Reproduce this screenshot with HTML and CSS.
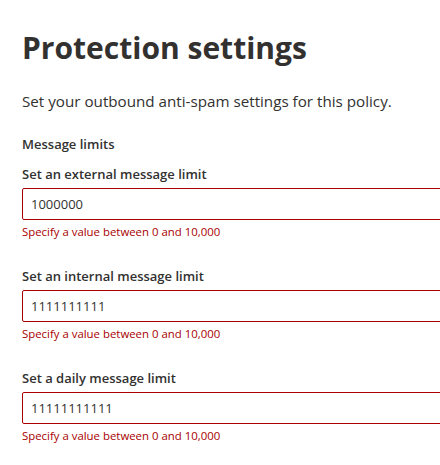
FILE: index.html
```html
<!DOCTYPE html>
<html lang="en">

<head>
  <meta charset="UTF-8">
  <meta name="viewport" content="width=device-width, initial-scale=1.0">
  <title>Protection settings</title>
  <link rel="stylesheet" href="styles.css">
</head>

<body>
  <div class="panel">
    <h1>Protection settings</h1>
    <p class="intro">Set your outbound anti-spam settings for this policy.</p>

    <h2>Message limits</h2>

    <div class="field">
      <label for="externalLimit">Set an external message limit</label>
      <input type="text" id="externalLimit" value="1000000">
      <div class="error">Specify a value between 0 and 10,000</div>
    </div>

    <div class="field">
      <label for="internalLimit">Set an internal message limit</label>
      <input type="text" id="internalLimit" value="1111111111">
      <div class="error">Specify a value between 0 and 10,000</div>
    </div>

    <div class="field">
      <label for="dailyLimit">Set a daily message limit</label>
      <input type="text" id="dailyLimit" value="11111111111">
      <div class="error">Specify a value between 0 and 10,000</div>
    </div>
  </div>
</body>

</html>
```

FILE: styles.css
```css
body {
  margin: 0;
  font-family: "Open Sans", "Noto Sans", sans-serif;
  color: #323130;
  background: #fff;
  overflow: hidden;
}

.panel {
  padding: 24px 0 0 22px;
  width: 480px;
}

h1 {
  margin: 0;
  font-size: 30px;
  font-weight: 700;
  line-height: 48px;
}

.intro {
  margin: 19px 0 0;
  font-size: 15.2px;
  line-height: 20px;
}

h2 {
  margin: 23px 0 6px;
  font-size: 13px;
  font-weight: 600;
  line-height: 20px;
}

.field {
  margin-bottom: 22px;
}

.field label {
  display: block;
  padding: 4px 0 4px;
  font-size: 13px;
  font-weight: 600;
  line-height: 20px;
}

.field input {
  box-sizing: border-box;
  display: block;
  width: 100%;
  height: 32px;
  padding: 0 8px;
  border: 1px solid #a80000;
  border-radius: 2px;
  font-family: inherit;
  font-size: 13px;
  color: #323130;
  outline: none;
}

.error {
  padding-top: 4px;
  font-size: 11.4px;
  line-height: 16px;
  color: #a80000;
}
```
